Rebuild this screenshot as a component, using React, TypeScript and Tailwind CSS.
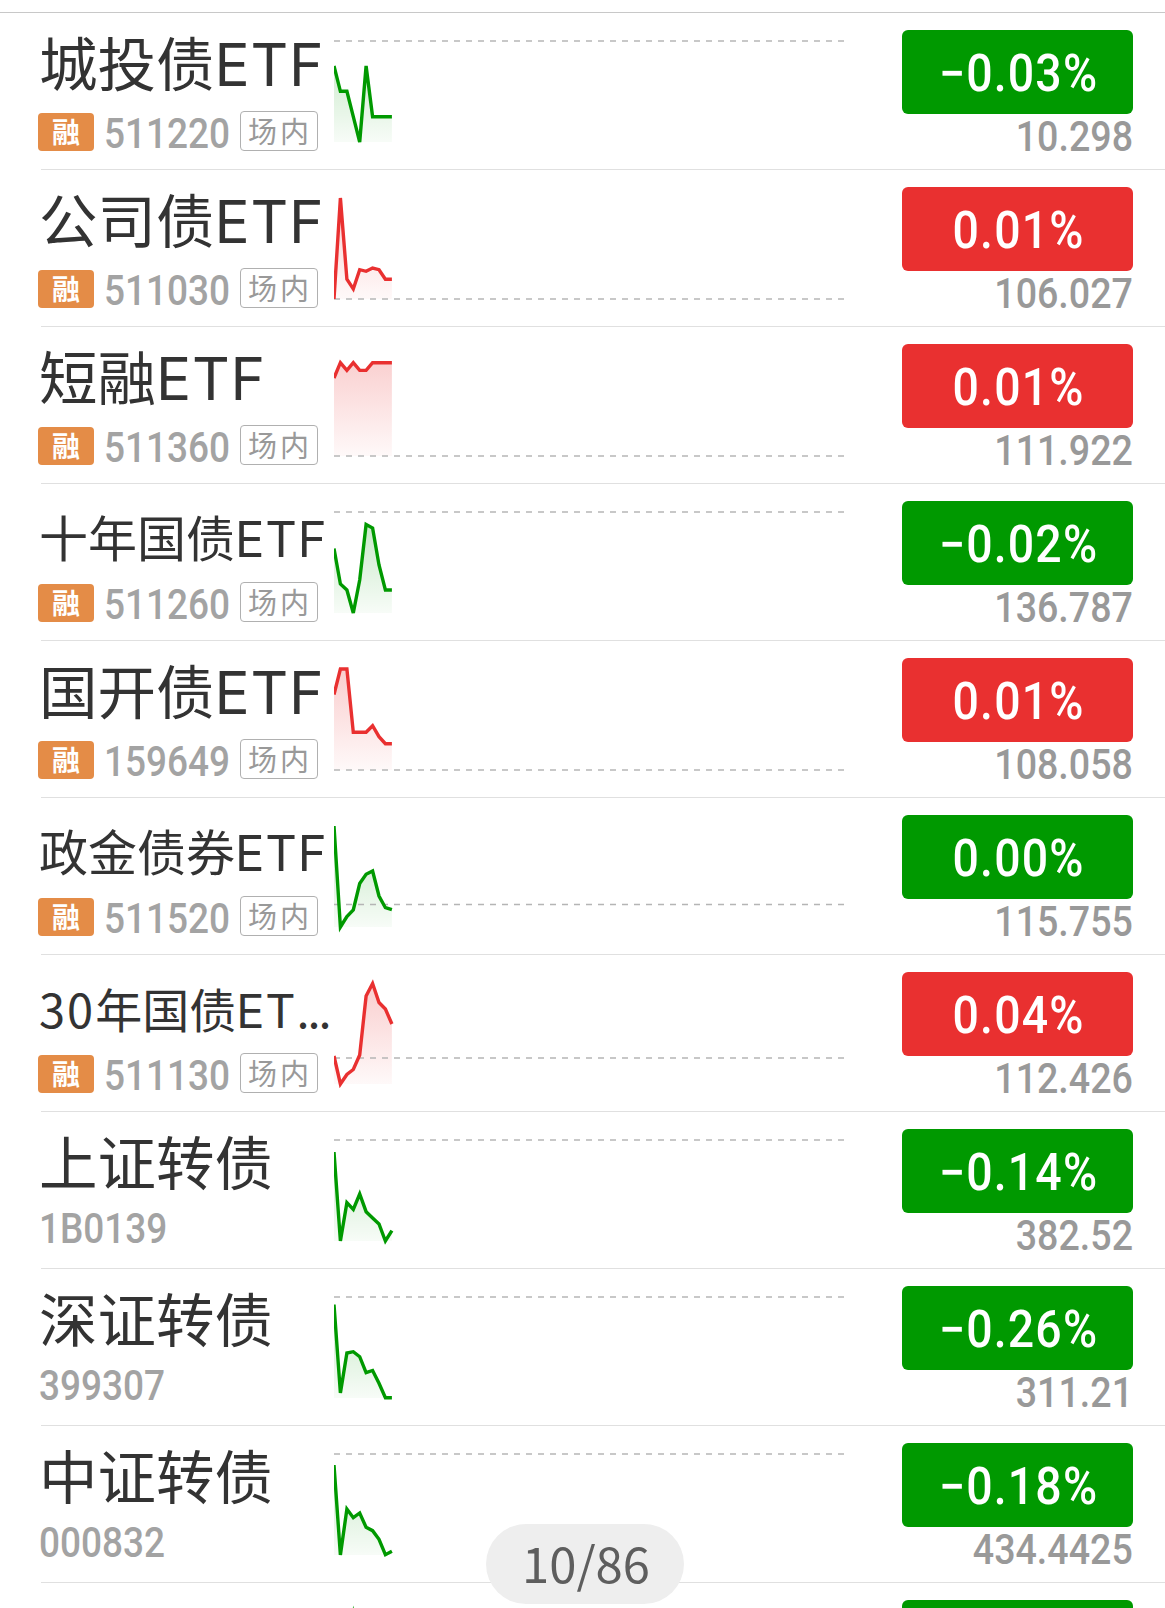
import React from 'react';

interface Quote {
    prefix?: string;
    name: string;
    suffix?: string;
    ellipsis?: boolean;
    nameSize: 'lg' | 'md' | 'sm';
    code: string;
    margin: boolean;
    change: string;
    up: boolean;
    price: string;
    // y of the previous close line inside the 156px tall row
    base: number;
    points: number[];
}

const quotes: Quote[] = [
    { name: '城投债', suffix: 'ETF', nameSize: 'lg', code: '511220', margin: true, change: '−0.03%', up: false, price: '10.298', base: 28, points: [53, 78.3, 78.3, 103.7, 129, 53, 103.7, 103.7, 103.7, 103.7] },
    { name: '公司债', suffix: 'ETF', nameSize: 'lg', code: '511030', margin: true, change: '0.01%', up: true, price: '106.027', base: 129, points: [129, 28, 109.3, 119, 99.7, 101.3, 98, 99.7, 109.3, 109.3] },
    { name: '短融', suffix: 'ETF', nameSize: 'lg', code: '511360', margin: true, change: '0.01%', up: true, price: '111.922', base: 129, points: [51, 35.7, 43.4, 35.7, 43.4, 43.4, 35.7, 35.7, 35.7, 35.7] },
    { name: '十年国债', suffix: 'ETF', nameSize: 'md', code: '511260', margin: true, change: '−0.02%', up: false, price: '136.787', base: 28, points: [64.5, 100, 106, 129, 96, 40.5, 44, 81, 106, 106] },
    { name: '国开债', suffix: 'ETF', nameSize: 'lg', code: '159649', margin: true, change: '0.01%', up: true, price: '108.058', base: 129, points: [53.5, 28, 28, 91.3, 91.3, 91.3, 84.7, 95.7, 102.7, 102.7] },
    { name: '政金债券', suffix: 'ETF', nameSize: 'md', code: '511520', margin: true, change: '0.00%', up: false, price: '115.755', base: 106.5, points: [28, 129, 118.5, 112, 85.5, 76.3, 73, 98, 109.7, 111.7] },
    { prefix: '30', name: '年国债', suffix: 'ET', ellipsis: true, nameSize: 'sm', code: '511130', margin: true, change: '0.04%', up: true, price: '112.426', base: 103, points: [101, 129, 119.5, 114.5, 100, 41, 28.5, 47.5, 54, 69] },
    { name: '上证转债', nameSize: 'lg', code: '1B0139', margin: false, change: '−0.14%', up: false, price: '382.52', base: 28, points: [40, 129, 90.7, 97.5, 82, 99.7, 106, 112, 129, 118.7] },
    { name: '深证转债', nameSize: 'lg', code: '399307', margin: false, change: '−0.26%', up: false, price: '311.21', base: 28, points: [35.5, 124, 84, 82.7, 87.7, 103.7, 101.5, 114.3, 128.7, 128.7] },
    { name: '中证转债', nameSize: 'lg', code: '000832', margin: false, change: '−0.18%', up: false, price: '434.4425', base: 28, points: [39, 129, 83, 91.7, 87, 101.3, 104.7, 113.3, 128.7, 125.3] },
];

const nameClass = {
    lg: 'text-[58.5px] mt-[11px] -ml-[2px]',
    md: 'text-[49px] mt-[15px] -ml-[2px]',
    sm: 'text-[47px] mt-[16px] -ml-[2px]',
};

const STEP = 6.43;
const BOTTOM = 129;

const Sparkline: React.FC<{ id: string; quote: Quote }> = ({ id, quote }) => {
    const color = quote.up ? '#e93030' : '#009900';
    const line = quote.points.map((y, i) => `${(i * STEP).toFixed(1)},${y}`).join(' ');
    const lastX = (quote.points.length - 1) * STEP;
    const thin = quote.base !== 28 && quote.base !== BOTTOM;

    return (
        <svg width="510" height="156" viewBox="0 0 510 156" className="shrink-0">
            <defs>
                <linearGradient id={id} gradientUnits="userSpaceOnUse" x1="0" y1="28" x2="0" y2="129">
                    <stop offset="0" stopColor={color} stopOpacity="0.24" />
                    <stop offset="1" stopColor={color} stopOpacity="0.03" />
                </linearGradient>
            </defs>
            <polygon points={`0,${BOTTOM} ${line} ${lastX},${BOTTOM}`} fill={`url(#${id})`} />
            <line x1="0" x2="510" y1={quote.base} y2={quote.base} stroke={thin ? '#b5b5b5' : '#c8c8c8'} strokeWidth={thin ? 1.4 : 2} strokeDasharray="6 6" />
            <polyline points={line} fill="none" stroke={color} strokeWidth="3.4" />
        </svg>
    );
};

const QuoteRow: React.FC<{ quote: Quote; index: number }> = ({ quote, index }) => (
    <li className="ml-[41px] flex h-[157px] border-b border-[#e0e0e0]">
        <div className="flex w-[293px] shrink-0 flex-col">
            <div className={`-mb-4 h-[74px] leading-[74px] whitespace-nowrap text-[#333333] ${nameClass[quote.nameSize]}`}>
                {quote.prefix && <span className="tracking-[2px]">{quote.prefix}</span>}
                {quote.name}
                {quote.suffix && <span className="font-[Inter] tracking-[0.8px]">{quote.suffix}</span>}
                {quote.ellipsis && <span className="tracking-[-2px]">...</span>}
            </div>
            <div className={`mt-auto flex h-[42px] items-center ${quote.margin ? 'mb-[16px]' : 'mb-[19px]'}`}>
                {quote.margin && (
                    <span className="-ml-[3px] mr-[10px] flex h-[38px] w-14 items-center justify-center rounded bg-[#e48c47] pb-[2px] text-[28px] font-bold text-white">
                        融
                    </span>
                )}
                <span className={`font-[Roboto] text-[42px] font-medium text-[#a3a3a3] ${quote.margin ? 'w-[125px] pt-[2px]' : '-ml-[2px]'}`}>
                    <span className="inline-block origin-left scale-x-[0.88]">{quote.code}</span>
                </span>
                {quote.margin && (
                    <span className="mb-[2px] ml-[11px] flex h-10 w-[78px] items-center justify-center rounded border-[1.5px] border-[#b0b0b0] pl-[2px] text-[29px] tracking-[3px] text-[#999999]">
                        场内
                    </span>
                )}
            </div>
        </div>
        <Sparkline id={`fill-${index}`} quote={quote} />
        <div className="mr-8 ml-auto flex w-[231px] flex-col items-end pt-[17px] font-[Roboto]">
            <div className={`flex h-[84px] w-full items-center justify-center rounded-md pt-1 pl-[2px] text-[51px] font-medium text-white ${quote.up ? 'bg-[#e93030]' : 'bg-[#009900]'}`}>
                <span className="inline-block scale-x-[0.91] tracking-[1.3px]">{quote.change}</span>
            </div>
            <div className="mt-[1px] origin-right scale-x-[0.895] text-[42px] leading-[44px] font-medium text-[#999999]">
                {quote.price}
            </div>
        </div>
    </li>
);

const App: React.FC = () => {
    return (
        <div className="relative h-[1608px] w-[1165px] overflow-hidden bg-white pt-3 font-['Noto_Sans_CJK_SC',sans-serif]">
            <ul className="border-t border-[#c8c8c8]">
                {quotes.map((quote, index) => (
                    <QuoteRow key={quote.code} quote={quote} index={index} />
                ))}
                {/* Next row, cut off by the bottom of the screen */}
                <li className="ml-[41px] flex h-[157px]">
                    <svg width="65" height="156" viewBox="0 0 65 156" className="ml-[293px]">
                        <polyline points="12.9,64 19.3,31 25.7,64" fill="none" stroke="#009900" strokeWidth="3.2" strokeMiterlimit="10" />
                    </svg>
                    <div className="mt-[17px] mr-8 ml-auto h-[84px] w-[231px] rounded-md bg-[#009900]" />
                </li>
            </ul>

            {/* Scroll position */}
            <div className="absolute top-[1524px] left-[486px] flex h-20 w-[198px] items-center justify-center rounded-full bg-[#eeeeee] pb-1 pl-[2px] text-[49px] text-[#5e5e5e]">
                10/86
            </div>
        </div>
    );
};

export default App;
